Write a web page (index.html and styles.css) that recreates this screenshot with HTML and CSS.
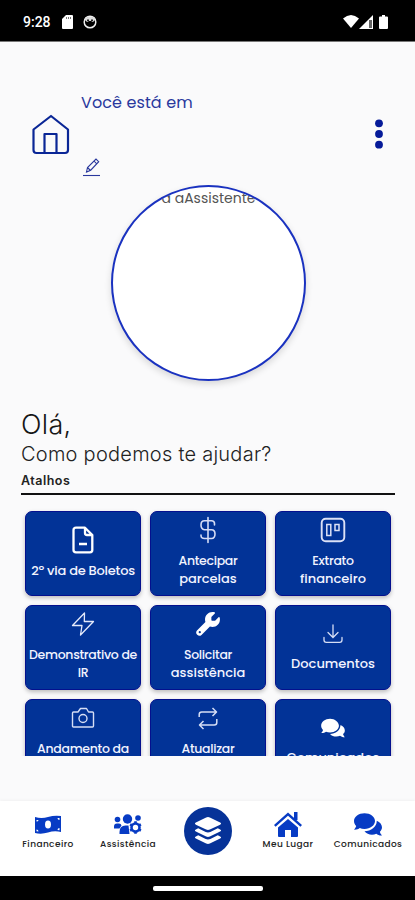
FILE: index.html
```html
<!DOCTYPE html>
<html lang="pt-BR">
<head>
    <meta charset="UTF-8">
    <meta name="viewport" content="width=device-width, initial-scale=1.0">
    <title>Início</title>
    <link rel="stylesheet" href="styles.css">
</head>
<body>
    <!-- Status bar -->
    <div class="status-bar">
        <span class="time">9:28</span>
        <svg class="sd" width="11" height="14" viewBox="0 0 11 14"><path fill="#fff" d="M4 0h6q1 0 1 1v12q0 1-1 1H1q-1 0-1-1V4z"/><path stroke="#777" d="M4.500 2v2M6.500 2v2M8.500 2v2"/></svg>
        <svg class="face" width="14" height="14" viewBox="0 0 14 14"><circle cx="7" cy="7" r="5.800" fill="none" stroke="#eee" stroke-width="1.500"/><path fill="#ddd" d="M2 3l3-1h4l3 1v2l-2 2-2-1H6L4 7 2 5z"/><path fill="#222" d="M4 4.500h2V6H4zM8 4.500h2V6H8z"/></svg>
        <div class="signals">
            <svg width="16" height="13" viewBox="0 0 16 13"><path fill="#fff" d="M0 3.500Q8-3.500 16 3.500L8 13z"/></svg>
            <svg width="14" height="14" viewBox="0 0 14 14"><path fill="#fff" d="M14 0v14H0z"/><path fill="#666" d="M10 5h3v8h-3z"/></svg>
            <svg class="battery" width="9" height="14" viewBox="0 0 9 14"><path fill="#fff" d="M3 0h3v1.500h2q1 0 1 1V13q0 1-1 1H1q-1 0-1-1V2.500q0-1 1-1h2z"/></svg>
        </div>
    </div>

    <!-- Header -->
    <header>
        <svg class="home" width="38" height="41" viewBox="0 0 38 41" fill="none" stroke="#0a2696" stroke-width="2.200" stroke-linejoin="round"><path d="M1.500 15.500L19 2l17 13.500V36q0 3-3 3H4.500q-3 0-3-3zM12.500 39V20h12V39"/></svg>
        <div class="place">
            <span>Você está em</span>
            <svg width="19" height="20" viewBox="0 0 19 20" fill="none" stroke="#29389d" stroke-width="1.100"><path d="M4.500 15l1-4.500 8.500-8.500 2.700 2.700-8 8.500zM12 4l2.500 2.700M5.500 10.500l3 3"/><path d="M1 18.500h17"/></svg>
        </div>
        <svg class="more" width="8" height="30" viewBox="0 0 8 30" fill="#061b99"><circle cx="4" cy="4.300" r="3.900"/><circle cx="4" cy="15" r="3.900"/><circle cx="4" cy="25.700" r="3.900"/></svg>
    </header>

    <main>
        <div class="avatar"><span>a aAssistente</span></div>
        <h1>Olá,</h1>
        <p class="question">Como podemos te ajudar?</p>
        <h2>Atalhos</h2>

        <div class="shortcuts">
            <a class="card card-boletos">
                <svg width="24" height="28" viewBox="0 0 24 28" fill="none" stroke="#fff" stroke-width="2.300" stroke-linejoin="round"><path d="M14 1.700H5Q2.500 1.700 2.500 4v20q0 2.300 2.500 2.300h14q2.300 0 2.300-2.300V9zM14 2v5q0 2 2 2h5M8 18h8"/></svg>
                <span>2º via de Boletos</span>
            </a>
            <a class="card">
                <svg width="18" height="28" viewBox="0 0 18 28" fill="none" stroke="#d5dcf5" stroke-width="1.600" stroke-linecap="round"><path d="M9 1.500v25M15.500 9V7.500q0-2.700-3-2.700h-7Q2 4.800 2 9t3.500 4.700h7Q16 13.700 16 18t-3.500 4.500h-7q-3.500 0-3.500-3V19"/></svg>
                <span><b class="tight">Antecipar</b><br>parcelas</span>
            </a>
            <a class="card">
                <svg width="26" height="28" viewBox="0 0 26 28" fill="none" stroke="#dce1f6"><rect x="1.700" y="2.700" width="22.600" height="22.600" rx="4" stroke-width="1.900"/><path d="M6.800 8.500h4v11h-4zM15 8.500h4v6h-4z" stroke-width="1.500"/></svg>
                <span><b class="tight">Extrato</b><br>financeiro</span>
            </a>
            <a class="card">
                <svg width="24" height="28" viewBox="0 0 24 28" fill="none" stroke="#e4e9fa" stroke-width="1.300" stroke-linejoin="round"><path d="M13.500 3L1.500 15.500H11L9.500 25 22.500 11.500h-9.200z"/></svg>
                <span class="tight">Demonstrativo de<br>IR</span>
            </a>
            <a class="card">
                <svg width="24" height="28" viewBox="0 0 512 600" fill="#fff"><path transform="translate(0 44)" fill-rule="evenodd" d="M352 320c88 0 160-72 160-160 0-15-2-30-6-44-3-11-16-14-24-6l-69 69q-5 5-12 5h-57q-16 0-16-16v-57q0-7 5-12l69-69c8-8 5-21-6-24-14-4-29-6-44-6-88 0-160 72-160 160 0 19 3 37 9 54L20 395a69 69 0 0 0 97 97l181-181c17 6 35 9 54 9zM80 408a24 24 0 1 1 0 48 24 24 0 0 1 0-48z"/></svg>
                <span><b class="tight">Solicitar</b><br>assistência</span>
            </a>
            <a class="card card-one">
                <svg width="20" height="20" viewBox="0 0 20 20" fill="none" stroke="#d6def5" stroke-width="1.300" stroke-linecap="round"><path d="M10 1v12M5 8.500l5 5 5-5M1 13.500V16q0 2.300 2.300 2.300h13.400q2.300 0 2.300-2.300v-2.500"/></svg>
                <span>Documentos</span>
            </a>
            <a class="card">
                <svg width="24" height="28" viewBox="0 0 24 28" fill="none" stroke="#d6def5" stroke-width="1.400" stroke-linejoin="round"><path d="M3 8h4l2.500-3.500h6L17.500 8h4q1 0 1 1v13q0 1-1 1h-19q-1 0-1-1V9q0-1 1-1z"/><circle cx="12" cy="14.500" r="4"/></svg>
                <span class="tight">Andamento da</span>
            </a>
            <a class="card">
                <svg width="20" height="28" viewBox="0 0 20 28" fill="none" stroke="#d6def5" stroke-width="1.500" stroke-linejoin="round"><path d="M1.200 13v-2.500Q1.200 8 3.700 8H18M14.500 4L18.500 8l-4 4M18.800 15v3.500q0 2.500-2.500 2.500H2M5.500 17l-4 4 4 4"/></svg>
                <span class="tight">Atualizar</span>
            </a>
            <a class="card card-one">
                <svg width="24" height="20" viewBox="0 0 32 27" fill="#fff"><path d="M12 1C5.400 1 0 5.200 0 10.500c0 2.200 1 4.200 2.500 5.700C2.200 17.800.8 19.500.1 20.300c2.600.2 5-.8 6.500-1.900 1.600.7 3.400 1.100 5.400 1.100 6.600 0 12-4 12-9S18.600 1 12 1z"/><path d="M26 9.500c.2 7-6.500 12-14 12 2 2.600 5.300 3.500 8.500 3.500 1.800 0 3.500-.4 5-1 1.600 1.200 3.900 2.200 6.500 2-1.200-1.300-2.200-3-2.400-4.300C34 17.500 32 12 26 9.500z"/></svg>
                <span>Comunicados</span>
            </a>
        </div>
    </main>

    <!-- Bottom navigation -->
    <nav>
        <a class="tab">
            <svg width="26" height="24" viewBox="0 0 26 24"><path fill="#073bc4" d="M0 4q6.500 2 13 0t13-1v16q-6.500-1.500-13 .5t-13 .5z"/><ellipse cx="13" cy="11.500" rx="3" ry="4" fill="#fff"/><path fill="#fff" d="M1.500 7h2q0 1.500-2 1.500zM1.500 16.500q2 0 2 2l-2-.2zM24.500 5h-2q0 2 2 2zM24.500 15q-2 0-2 2l2 .2z"/></svg>
            <span>Financeiro</span>
        </a>
        <a class="tab">
            <svg width="30" height="24" viewBox="0 0 30 24" fill="#073bc4"><circle cx="14.500" cy="6" r="4.700"/><circle cx="4.500" cy="6.500" r="2.800"/><circle cx="25" cy="5" r="2.800"/><path d="M1 15.500v-2q0-3 3-3h2q2 0 2.500 2l-2 3zM6.500 21v-2q0-6.500 6-6.500h3l1 8.500z"/><g fill="none" stroke="#073bc4"><circle cx="22.500" cy="14.500" r="4" stroke-width="2.600"/><path stroke-width="2.600" d="M22.500 8.300v2M22.500 18.700v2M17.100 11.400l1.800 1M26.100 16.600l1.800 1M17.100 17.600l1.800-1M26.100 12.400l1.800-1"/></g></svg>
            <span>Assistência</span>
        </a>
        <a class="center">
            <svg width="28" height="32" viewBox="0 0 30 32" fill="#fff"><path d="M15 1q1 0 2 .5L28 7q2 1 0 2.200l-11 5.300q-2 1-4 0L2 9.200Q0 8 2 7l11-5.500Q14 1 15 1z"/><path d="M4.500 13l8 4q2.500 1 5 0l8-4 2.500 1.300q2 1.200 0 2.200l-11 5.300q-2 1-4 0L2 16.500q-2-1 0-2.200zM4.500 20.500l8 4q2.500 1 5 0l8-4 2.500 1.300q2 1.200 0 2.200l-11 5.500q-2 1-4 0L2 24q-2-1 0-2.200z"/></svg>
        </a>
        <a class="tab">
            <svg class="house" width="28" height="26" viewBox="0 0 28 26"><path fill="#073bc4" d="M4 15.500L14 7l10 8.500V24q0 1-1 1h-6v-7h-6v7H5q-1 0-1-1z"/><path fill="#073bc4" d="M20 0h3.500v8H20z"/><path fill="none" stroke="#fff" stroke-width="1" d="M2 16L14 5.300 26 16"/><path fill="none" stroke="#073bc4" stroke-width="2.400" d="M.8 13.800L14 2l13.200 11.800"/></svg>
            <span>Meu Lugar</span>
        </a>
        <a class="tab">
            <svg width="28" height="24" viewBox="0 0 32 27" fill="#073bc4"><path d="M12 0C5.400 0 0 4 0 9c0 2.200 1 4.200 2.500 5.700C2.200 16.300.8 18 .1 18.800c2.600.2 5-.8 6.500-1.900 1.600.7 3.400 1.100 5.400 1.100 6.600 0 12-4 12-9s-5.400-9-12-9z"/><path d="M26 8.500c.2 7-6.500 12-14 12 2 2.600 5.300 4 8.500 4 1.800 0 3.500-.4 5-1 1.600 1.200 3.900 2.200 6.500 2-1.200-1.300-2.200-3-2.400-4.300C34 17 32 11 26 8.500z"/></svg>
            <span>Comunicados</span>
        </a>
    </nav>
    <div class="gesture-bar"><i></i></div>
</body>
</html>
```
FILE: styles.css
```css
* {
    box-sizing: border-box;
}
body {
    margin: 0;
    width: 415px;
    height: 900px;
    overflow: hidden;
    display: flex;
    flex-direction: column;
    background: #fafafb;
    font-family: Poppins, Inter, "Noto Sans", sans-serif;
}
svg {
    display: block;
    flex: none;
}
.status-bar {
    flex: none;
    height: 42px;
    padding: 2px 27px 0 23px;
    display: flex;
    align-items: center;
    background: #000;
    border-bottom: 1px solid #777;
    color: #fff;
}
.time {
    width: 39px;
    font: 500 14px Roboto, sans-serif;
}
.face {
    margin-left: 10px;
}
.signals {
    margin-left: auto;
    display: flex;
}
.battery {
    margin-left: 6px;
}
header {
    flex: none;
    height: 143px;
    padding: 50px 32px 0;
    display: flex;
}
.home {
    margin-top: 22px;
}
.place {
    padding-left: 11px;
    flex: 1;
    color: #29389d;
    font-size: 16px;
    line-height: 22px;
    letter-spacing: 0.1px;
    white-space: nowrap;
}
.place span {
    display: block;
    margin-bottom: 43px;
}
.place svg {
    margin-left: 1px;
}
.more {
    margin-top: 27px;
}
main {
    flex: none;
    height: 571px;
    padding: 0 20px 0 21px;
    overflow: hidden;
}
.avatar {
    width: 195px;
    height: 196px;
    margin: 0 0 0 90px;
    border: 2px solid #1a32c0;
    border-radius: 50%;
    overflow: hidden;
    background: #fff;
    box-shadow: 0 3px 7px rgba(0, 0, 0, 0.14);
    color: #555;
    font-size: 14px;
    line-height: 22px;
    text-align: center;
}
h1 {
    margin: 27px 0 0;
    font-family: Inter, sans-serif;
    font-size: 27px;
    font-weight: 300;
    line-height: 34px;
    letter-spacing: 0.3px;
    color: #161616;
}
.question {
    margin: 0;
    font-family: Inter, sans-serif;
    font-size: 20px;
    font-weight: 300;
    line-height: 24px;
    letter-spacing: 0.25px;
    color: #222;
}
h2 {
    margin: 5px 0 0;
    height: 24px;
    border-bottom: 2px solid #111;
    font-family: Inter, sans-serif;
    font-size: 12.5px;
    font-weight: 600;
    line-height: 19px;
    letter-spacing: 0.5px;
    color: #222;
}
.shortcuts {
    padding: 16px 4px 0;
    display: grid;
    grid-template-columns: repeat(3, 116px);
    grid-auto-rows: 85px;
    gap: 9px;
    height: 262px;
    overflow: hidden;
}
.card {
    padding-top: 4px;
    display: flex;
    flex-direction: column;
    align-items: center;
    gap: 8px;
    background: #023397;
    border: 1px solid #04108e;
    border-radius: 7px;
    box-shadow: 0 2px 4px rgba(0, 0, 0, 0.25);
    color: #f2f4ff;
    font-size: 13px;
    font-weight: 500;
    line-height: 18px;
    text-align: center;
    white-space: nowrap;
}
.card .tight {
    font-size: 12.5px;
    font-weight: 500;
    letter-spacing: -0.3px;
}
.card-boletos {
    padding-top: 14px;
    letter-spacing: -0.25px;
}
.card-one {
    padding-top: 18px;
    gap: 11px;
}
nav {
    flex: none;
    height: 75px;
    margin-top: 45px;
    padding: 0 7px 0 8px;
    display: grid;
    grid-template-columns: repeat(5, 80px);
    background: #fff;
    box-shadow: 0 -1px 3px rgba(0, 0, 0, 0.04);
}
.tab {
    padding-top: 12px;
    display: flex;
    flex-direction: column;
    align-items: center;
    gap: 1px;
    color: #222;
    font-size: 9px;
    font-weight: 500;
    line-height: 12px;
    letter-spacing: 0.4px;
    white-space: nowrap;
}
.house {
    margin: -1px 0;
}
.center {
    justify-self: center;
    width: 48px;
    height: 48px;
    margin-top: 6px;
    display: flex;
    align-items: center;
    justify-content: center;
    background: #063298;
    border-radius: 50%;
}
.gesture-bar {
    flex: none;
    height: 24px;
    padding-top: 10px;
    background: #000;
}
.gesture-bar i {
    display: block;
    width: 110px;
    height: 5px;
    margin: 0 auto;
    background: #fff;
    border-radius: 2px;
}
```
